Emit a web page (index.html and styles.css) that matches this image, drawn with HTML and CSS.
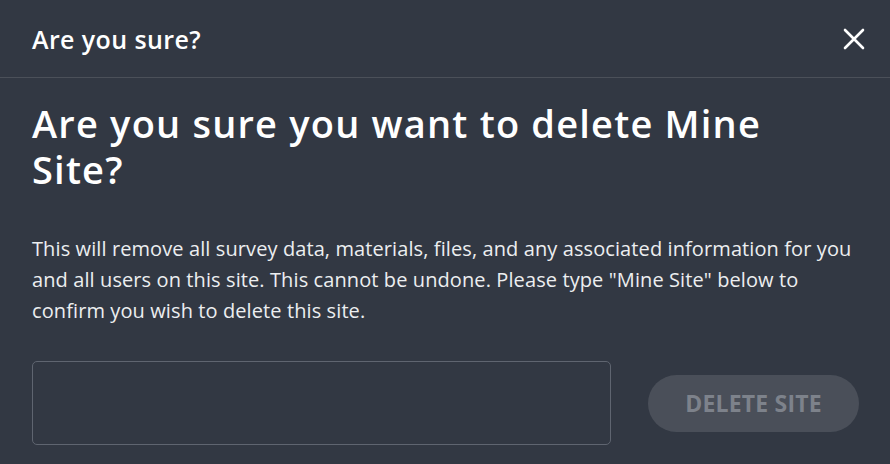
FILE: index.html
```html
<!DOCTYPE html>
<html lang="en">
<head>
<meta charset="utf-8">
<title>Are you sure?</title>
<link rel="stylesheet" href="styles.css">
</head>
<body>
<div class="dialog">
  <header class="dialog-header">
    <h2 class="dialog-title">Are you sure?</h2>
    <button class="close-btn" aria-label="Close">
      <svg width="22" height="22" viewBox="0 0 22 22" fill="none" stroke="#ffffff" stroke-width="2.6" stroke-linecap="round">
        <path d="M2 2 L20 20 M20 2 L2 20"/>
      </svg>
    </button>
  </header>
  <section class="dialog-body">
    <h1 class="dialog-heading">Are you sure you want to delete Mine Site?</h1>
    <p class="dialog-text">This will remove all survey data, materials, files, and any associated information for you and all users on this site. This cannot be undone. Please type "Mine Site" below to confirm you wish to delete this site.</p>
    <div class="confirm-row">
      <input class="confirm-input" type="text" aria-label="Site name">
      <button class="delete-btn" disabled>DELETE SITE</button>
    </div>
  </section>
</div>
</body>
</html>
```
FILE: styles.css
```css
html, body {
  margin: 0;
  padding: 0;
  background: #323843;
}
body {
  font-family: "Open Sans", Lato, sans-serif;
  color: #ffffff;
  width: 890px;
  height: 464px;
  overflow: hidden;
}
.dialog {
  display: flex;
  flex-direction: column;
}
.dialog-header {
  height: 78px;
  box-sizing: border-box;
  border-bottom: 1px solid #4b5059;
  display: flex;
  align-items: center;
  justify-content: space-between;
  padding: 0 24px 0 32px;
}
.dialog-title {
  margin: 0;
  font-size: 25px;
  font-weight: 600;
  letter-spacing: 0.4px;
}
.close-btn {
  background: none;
  border: 0;
  padding: 0;
  width: 24px;
  height: 24px;
  display: flex;
  align-items: center;
  justify-content: center;
  cursor: pointer;
}
.dialog-body {
  padding: 22px 31px 0 32px;
}
.dialog-heading {
  margin: 0;
  font-size: 38px;
  line-height: 46px;
  font-weight: 600;
  letter-spacing: 1.2px;
  max-width: 770px;
}
.dialog-text {
  margin: 41px 0 0;
  font-size: 20px;
  line-height: 31px;
  letter-spacing: 0.1px;
  color: #eceef0;
}
.confirm-row {
  margin-top: 35px;
  display: flex;
  align-items: center;
  gap: 37px;
}
.confirm-input {
  flex: 1;
  height: 84px;
  box-sizing: border-box;
  background: transparent;
  border: 1px solid #5f6570;
  border-radius: 5px;
  color: #fff;
  font: inherit;
  padding: 0 16px;
}
.delete-btn {
  width: 211px;
  height: 57px;
  border: 0;
  border-radius: 29px;
  background: #4a4f59;
  color: #7d828b;
  font-family: "Open Sans", Lato, sans-serif;
  font-size: 23px;
  font-weight: 700;
  letter-spacing: 0.2px;
}
```
